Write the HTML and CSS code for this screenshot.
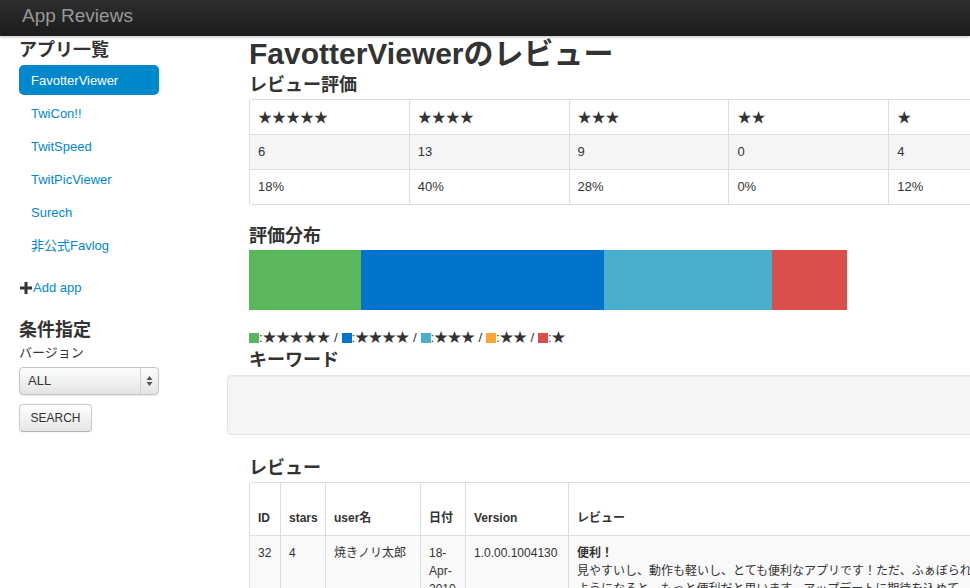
FILE: index.html
```html
<!DOCTYPE html>
<html lang="ja">
<head>
<meta charset="utf-8">
<title>App Reviews</title>
<link rel="stylesheet" href="styles.css">
</head>
<body>
<header class="navbar"><span class="brand">App Reviews</span></header>
<div class="layout">
  <aside class="sidebar">
    <h3 class="side-title">アプリ一覧</h3>
    <ul class="nav-list">
      <li class="active"><a href="#">FavotterViewer</a></li>
      <li><a href="#">TwiCon!!</a></li>
      <li><a href="#">TwitSpeed</a></li>
      <li><a href="#">TwitPicViewer</a></li>
      <li><a href="#">Surech</a></li>
      <li><a href="#">非公式Favlog</a></li>
    </ul>
    <a class="add-app" href="#"><svg class="plus" width="12" height="12" viewBox="0 0 12 12"><rect x="4.5" y="0" width="3" height="12" fill="#333"/><rect x="0" y="4.5" width="12" height="3" fill="#333"/></svg>Add app</a>
    <h3 class="side-title cond">条件指定</h3>
    <label class="field-label">バージョン</label>
    <div class="select"><span class="select-value">ALL</span><span class="select-arrows"><svg width="7" height="12" viewBox="0 0 7 12"><path d="M3.5 1 L6.5 5 L0.5 5 Z" fill="#555"/><path d="M3.5 11 L6.5 7 L0.5 7 Z" fill="#555"/></svg></span></div>
    <button class="btn" type="button">SEARCH</button>
  </aside>
  <main class="main">
    <h1>FavotterViewerのレビュー</h1>
    <h3>レビュー評価</h3>
    <table class="rating-table">
      <tr class="stars-row"><th>★★★★★</th><th>★★★★</th><th>★★★</th><th>★★</th><th>★</th></tr>
      <tr class="shade"><td>6</td><td>13</td><td>9</td><td>0</td><td>4</td></tr>
      <tr><td>18%</td><td>40%</td><td>28%</td><td>0%</td><td>12%</td></tr>
    </table>
    <h3>評価分布</h3>
    <div class="dist-bar">
      <div class="seg five" style="width:112px"></div>
      <div class="seg four" style="width:243px"></div>
      <div class="seg three" style="width:168px"></div>
      <div class="seg two" style="width:0px"></div>
      <div class="seg one" style="width:75px"></div>
    </div>
    <p class="legend"><span class="sw five"></span>:★★★★★ / <span class="sw four"></span>:★★★★ / <span class="sw three"></span>:★★★ / <span class="sw two"></span>:★★ / <span class="sw one"></span>:★</p>
    <h3>キーワード</h3>
    <div class="well"></div>
    <h3>レビュー</h3>
    <table class="review-table">
      <colgroup><col class="c-id"><col class="c-stars"><col class="c-user"><col class="c-date"><col class="c-ver"><col></colgroup>
      <tr><th>ID</th><th>stars</th><th>user名</th><th>日付</th><th>Version</th><th>レビュー</th></tr>
      <tr class="shade"><td>32</td><td>4</td><td>焼きノリ太郎</td><td>18-Apr-2010</td><td>1.0.00.1004130</td><td><strong>便利！</strong><br>見やすいし、動作も軽いし、とても便利なアプリです！ただ、ふぁぼられた時に通知が来る<br>ようになると、もっと便利だと思います。アップデートに期待を込めて、星4つです。</td></tr>
    </table>
  </main>
</div>
</body>
</html>
```
FILE: styles.css
```css
html, body {
  margin: 0;
  overflow: hidden;
}
body {
  font-family: "Liberation Sans", "Noto Sans CJK JP", sans-serif;
  font-size: 13px;
  line-height: 18px;
  color: #333;
  background: #fff;
}
.navbar {
  height: 36px;
  background: linear-gradient(#2e2e2e, #1c1c1c);
  box-shadow: 0 1px 3px rgba(0, 0, 0, 0.25);
}
.brand {
  display: block;
  padding-left: 22px;
  font-size: 19px;
  line-height: 32px;
  color: #999;
}
.layout {
  display: flex;
  padding-left: 19px;
}
.sidebar {
  width: 140px;
  flex: none;
}
.main {
  margin-left: 90px;
  width: 900px;
  flex: none;
}
h1 {
  margin: 0;
  font-size: 30px;
  line-height: 36px;
  font-weight: bold;
}
h3 {
  margin: 0;
  font-size: 18px;
  line-height: 27px;
  font-weight: bold;
}
.side-title {
  line-height: 28px;
}
.nav-list {
  list-style: none;
  margin: 1px 0 0;
  padding: 0;
  display: flex;
  flex-direction: column;
  gap: 3px;
}
.nav-list a {
  display: block;
  height: 30px;
  line-height: 31px;
  padding-left: 12px;
  color: #0088cc;
  text-decoration: none;
  border-radius: 5px;
}
.nav-list .active a {
  background: #0088cc;
  color: #fff;
}
.add-app {
  display: flex;
  align-items: center;
  margin-top: 18px;
  height: 19px;
  padding-left: 1px;
  color: #0088cc;
  text-decoration: none;
}
.plus {
  margin-right: 1px;
}
.cond {
  margin-top: 19px;
}
.field-label {
  display: block;
  line-height: 18px;
}
.select {
  margin-top: 5px;
  box-sizing: border-box;
  width: 140px;
  height: 28px;
  display: flex;
  border: 1px solid #c4c4c4;
  border-radius: 4px;
  background: linear-gradient(#fdfdfd, #e4e4e4);
  box-shadow: 0 1px 1px rgba(0, 0, 0, 0.08);
}
.select-value {
  flex: 1;
  padding-left: 8px;
  line-height: 26px;
}
.select-arrows {
  width: 17px;
  border-left: 1px solid #cfcfcf;
  display: flex;
  align-items: center;
  justify-content: center;
}
.btn {
  display: block;
  margin-top: 9px;
  box-sizing: border-box;
  width: 73px;
  height: 28px;
  padding: 0;
  font-family: inherit;
  font-size: 12px;
  color: #333;
  border: 1px solid #ccc;
  border-bottom-color: #b3b3b3;
  border-radius: 4px;
  background: linear-gradient(#ffffff, #e6e6e6);
  box-shadow: inset 0 1px 0 rgba(255, 255, 255, 0.2), 0 1px 2px rgba(0, 0, 0, 0.05);
}
.rating-table {
  width: 800px;
  table-layout: fixed;
  border-collapse: separate;
  border-spacing: 0;
  border: 1px solid #ddd;
  border-left: 0;
  border-radius: 4px;
  margin-bottom: 18px;
}
.rating-table th,
.rating-table td {
  padding: 8px;
  line-height: 18px;
  text-align: left;
  border-left: 1px solid #ddd;
  border-top: 1px solid #ddd;
  font-weight: normal;
}
.rating-table tr:first-child th {
  border-top: 0;
}
.stars-row th {
  font-size: 14px;
}
.rating-table .shade td {
  background: #f5f5f5;
}
.dist-bar {
  display: flex;
  height: 60px;
  margin-bottom: 19px;
}
.seg, .sw {
  flex: none;
}
.five { background: #5bb75b; }
.four { background: #0074cc; }
.three { background: #49afcd; }
.two { background: #faa732; }
.one { background: #da4f49; }
.legend {
  margin: 0;
  font-size: 13.5px;
  line-height: 18px;
}
.sw {
  display: inline-block;
  width: 10px;
  height: 10px;
  vertical-align: -1px;
}
.well {
  margin: 1px 0 20px -22px;
  box-sizing: border-box;
  height: 60px;
  background: #f5f5f5;
  border: 1px solid #e3e3e3;
  border-radius: 4px;
  box-shadow: inset 0 1px 1px rgba(0, 0, 0, 0.05);
}
.review-table {
  width: 900px;
  table-layout: fixed;
  border-collapse: separate;
  border-spacing: 0;
  border: 1px solid #ddd;
  border-left: 0;
  border-radius: 4px;
  font-size: 12px;
}
.c-id { width: 31px; }
.c-stars { width: 45px; }
.c-user { width: 95px; }
.c-date { width: 45px; }
.c-ver { width: 103px; }
.review-table th,
.review-table td {
  padding: 8px;
  line-height: 18px;
  text-align: left;
  vertical-align: top;
  border-left: 1px solid #ddd;
  border-top: 1px solid #ddd;
}
.review-table th {
  border-top: 0;
  padding-top: 26px;
  vertical-align: bottom;
  font-weight: bold;
}
.review-table .shade td {
  background: #f9f9f9;
}
```
